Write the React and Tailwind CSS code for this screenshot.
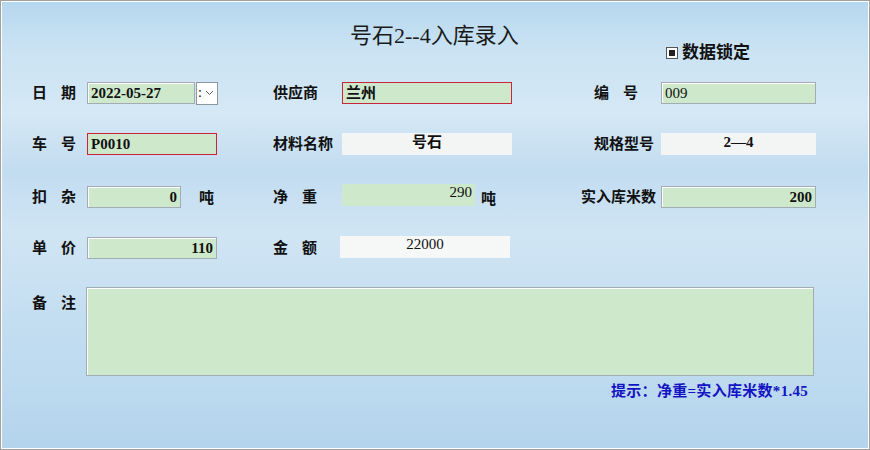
import React from 'react';

// 号石入库录入窗体
const Field = ({ value = '', className = '', right, red }) => (
  <div
    className={`h-[22px] flex items-center px-[3px] bg-[#cde8cb] border text-[15px] font-bold ${
      red ? 'border-[#c8243a]' : 'border-[#a3abb3] shadow-[inset_1px_1px_0_#ffffff]'
    } ${right ? 'justify-end' : ''} ${className}`}
  >
    {value}
  </div>
);

const Spaced = ({ a, b }) => (
  <div className="w-[44px] flex justify-between">
    <span>{a}</span>
    <span>{b}</span>
  </div>
);

export default function App() {
  return (
    <div className="w-[870px] h-[450px] border border-[#a0a0a0] shadow-[inset_0_0_0_1px_#ffffff] bg-[linear-gradient(180deg,#b5d7ee_0%,#c9e2f3_10%,#d5e8f5_25%,#c2dcf0_38%,#d0e5f4_52%,#c4def1_70%,#bddaef_85%,#b3d4ec_100%)] font-['Liberation_Serif','Noto_Sans_CJK_SC',serif] text-[15px] text-[#111] font-bold overflow-hidden">
      <div className="mt-[24px] h-[22px] leading-[22px] text-[22px] font-normal text-[#1a1a1a] pl-[349px]">
        号石2--4入库录入
      </div>
      <div className="mt-[-3px] h-[18px] flex items-center pl-[665px] text-[17px]">
        <div className="w-[12px] h-[12px] border border-[#555] bg-white flex items-center justify-center">
          <div className="w-[6px] h-[6px] bg-[#222]" />
        </div>
        <span className="ml-[4px] leading-[18px]">数据锁定</span>
      </div>

      {/* row 1 */}
      <div className="mt-[20px] h-[22px] flex items-center">
        <div className="w-[86px] pl-[31px]"><Spaced a="日" b="期" /></div>
        <div className="w-[186px] flex items-center">
          <Field value="2022-05-27" className="w-[108px]" />
          <div className="ml-[1px] w-[22px] h-[23px] bg-white border border-[#8e969e] flex items-center text-[14px] font-normal">
            <span className="ml-[1px] leading-none">:</span>
            <svg width="9" height="6" viewBox="0 0 9 6" className="ml-[3px]">
              <path d="M1 1 L4.5 4.5 L8 1" fill="none" stroke="#555" strokeWidth="1" />
            </svg>
          </div>
        </div>
        <div className="w-[69px]">供应商</div>
        <div className="w-[239px]"><Field value="兰州" red className="w-[170px]" /></div>
        <div className="w-[80px] pl-[13px]"><Spaced a="编" b="号" /></div>
        <Field value="009" className="w-[155px] font-normal" />
      </div>

      {/* row 2 */}
      <div className="mt-[29px] h-[22px] flex items-center">
        <div className="w-[86px] pl-[31px]"><Spaced a="车" b="号" /></div>
        <div className="w-[186px]"><Field value="P0010" red className="w-[130px]" /></div>
        <div className="w-[69px]">材料名称</div>
        <div className="w-[239px]">
          <div className="w-[170px] h-[22px] bg-[#f3f5f5] text-center leading-[18px]">号石</div>
        </div>
        <div className="w-[80px] pl-[13px]">规格型号</div>
        <div className="w-[155px] h-[22px] bg-[#f3f5f5] text-center leading-[18px]">2—4</div>
      </div>

      {/* row 3 */}
      <div className="mt-[31px] h-[22px] flex items-center">
        <div className="w-[86px] pl-[31px]"><Spaced a="扣" b="杂" /></div>
        <div className="w-[186px] flex items-center">
          <Field value="0" right className="w-[94px]" />
          <span className="ml-[18px] mt-[3px]">吨</span>
        </div>
        <div className="w-[69px]"><Spaced a="净" b="重" /></div>
        <div className="w-[239px] flex items-start">
          <div className="w-[133px] h-[22px] bg-[#cde8cb] text-right pr-[3px] leading-[16px] font-normal">290</div>
          <span className="ml-[6px] mt-[4px]">吨</span>
        </div>
        <div className="w-[80px]">实入库米数</div>
        <Field value="200" right className="w-[155px]" />
      </div>

      {/* row 4 */}
      <div className="mt-[29px] h-[22px] flex items-center">
        <div className="w-[86px] pl-[31px]"><Spaced a="单" b="价" /></div>
        <div className="w-[186px]"><Field value="110" right className="w-[130px]" /></div>
        <div className="w-[67px]"><Spaced a="金" b="额" /></div>
        <div className="w-[170px] h-[22px] mt-[-2px] bg-[#f6f7f7] text-center leading-[16px] font-normal">22000</div>
      </div>

      {/* 备注 */}
      <div className="mt-[28px] flex items-start">
        <div className="w-[85px] pl-[31px] pt-[5px]"><Spaced a="备" b="注" /></div>
        <div className="w-[728px] h-[89px] bg-[#cde8cb] border border-[#a3abb3] shadow-[inset_1px_1px_0_#ffffff]" />
      </div>

      <div className="mt-[7px] pl-[610px] leading-[17px] text-[#1414c4] tracking-[0.3px]">
        提示：净重=实入库米数*1.45
      </div>
    </div>
  );
}
